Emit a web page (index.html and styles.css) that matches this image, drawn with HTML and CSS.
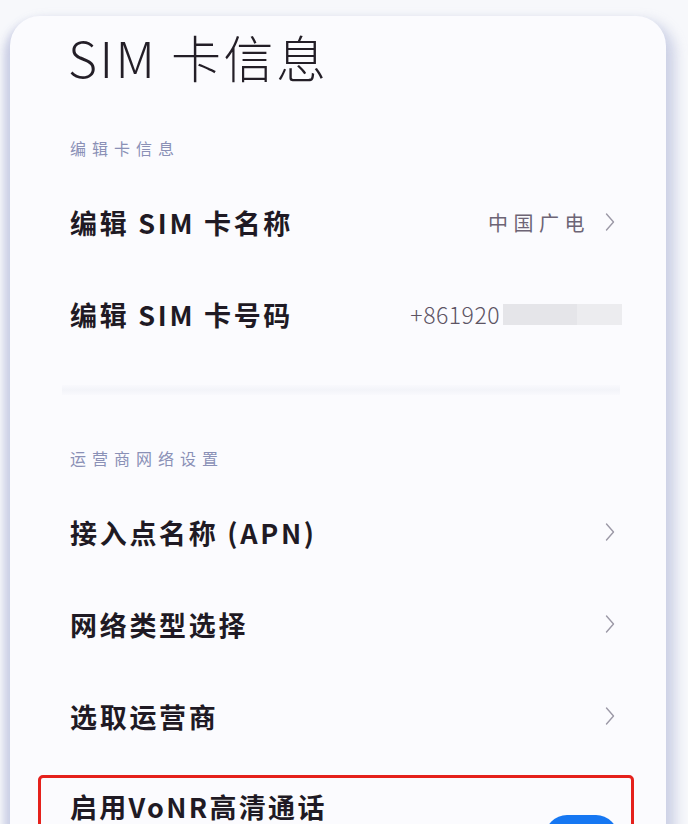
FILE: index.html
```html
<!DOCTYPE html>
<html lang="zh-CN">
<head>
<meta charset="utf-8">
<title>SIM 卡信息</title>
<link rel="stylesheet" href="styles.css">
</head>
<body>
<div class="page">
  <div class="card">
    <h1 class="title">SIM 卡信息</h1>

    <div class="section-label">编辑卡信息</div>
    <div class="row">
      <span class="row-title">编辑 SIM 卡名称</span>
      <span class="row-end">
        <span class="value">中国广电</span>
        <svg class="chev" viewBox="0 0 10 20" width="10" height="20"><polyline points="1.5,2 8.5,10 1.5,18" fill="none" stroke="#9b98a6" stroke-width="1.4" stroke-linecap="round" stroke-linejoin="round"/></svg>
      </span>
    </div>
    <div class="row">
      <span class="row-title">编辑 SIM 卡号码</span>
      <span class="row-end row-end-wide">
        <span class="number">+861920</span>
        <span class="mask"></span>
      </span>
    </div>

    <div class="divider"></div>

    <div class="section-label">运营商网络设置</div>
    <div class="row">
      <span class="row-title">接入点名称 (APN)</span>
      <svg class="chev" viewBox="0 0 10 20" width="10" height="20"><polyline points="1.5,2 8.5,10 1.5,18" fill="none" stroke="#9b98a6" stroke-width="1.4" stroke-linecap="round" stroke-linejoin="round"/></svg>
    </div>
    <div class="row">
      <span class="row-title">网络类型选择</span>
      <svg class="chev" viewBox="0 0 10 20" width="10" height="20"><polyline points="1.5,2 8.5,10 1.5,18" fill="none" stroke="#9b98a6" stroke-width="1.4" stroke-linecap="round" stroke-linejoin="round"/></svg>
    </div>
    <div class="row">
      <span class="row-title">选取运营商</span>
      <svg class="chev" viewBox="0 0 10 20" width="10" height="20"><polyline points="1.5,2 8.5,10 1.5,18" fill="none" stroke="#9b98a6" stroke-width="1.4" stroke-linecap="round" stroke-linejoin="round"/></svg>
    </div>

    <div class="highlight">
      <span class="row-title hl-title">启用VoNR高清通话</span>
      <span class="toggle"></span>
    </div>
  </div>
</div>
</body>
</html>
```

FILE: styles.css
```css
html, body {
  margin: 0;
  padding: 0;
}
body {
  width: 688px;
  height: 824px;
  overflow: hidden;
  background: #f7f8fb;
  font-family: "Noto Sans CJK SC", "Noto Sans", sans-serif;
  color: #1f1a24;
}
.page {
  padding: 16px 22px 0 10px;
  height: 808px;
}
.card {
  background: #fbfbfe;
  border-radius: 30px 30px 0 0;
  height: 100%;
  padding-top: 9px;
  box-shadow: -4px 8px 8px 2px rgba(196, 201, 226, 0.85), 6px 8px 12px 4px rgba(200, 205, 228, 0.8);
  overflow: hidden;
}
.title {
  margin: 0 0 0 58px;
  font-size: 50px;
  line-height: 62px;
  font-weight: 300;
  color: #231e27;
  letter-spacing: 2.5px;
}
.section-label {
  margin: 51px 0 18px 60px;
  font-size: 16px;
  line-height: 20px;
  letter-spacing: 6px;
  color: #8a90b6;
}
.divider + .section-label {
  margin-top: 0;
}
.row {
  height: 92px;
  display: flex;
  align-items: center;
  justify-content: space-between;
  padding: 0 51px 0 60px;
}
.row-title {
  font-size: 27px;
  font-weight: 700;
  letter-spacing: 2.7px;
  color: #1f1a24;
}
.row-end {
  display: flex;
  align-items: center;
  gap: 15px;
}
.row-end-wide {
  gap: 3px;
  margin-right: -7px;
}
.value {
  font-size: 20px;
  letter-spacing: 5.5px;
  color: #6d6475;
}
.number {
  font-size: 23px;
  font-weight: 300;
  color: #5d5464;
  letter-spacing: 0.5px;
}
.mask {
  width: 119px;
  height: 21px;
  background: linear-gradient(to right, #e5e5e9 0, #e5e5e9 62%, #ececef 62%, #ececef 100%);
}
.chev {
  display: block;
  flex: none;
}
.divider {
  height: 10px;
  margin: 25px 46px 53px 52px;
  background: linear-gradient(to bottom, #f9f9fd, #f3f4f9, #f9f9fd);
}
.highlight {
  margin: 13px 32px 0 28px;
  border: 3px solid #e5211c;
  border-radius: 5px;
  padding: 14px 13px 0 29px;
  height: 80px;
  display: flex;
  justify-content: space-between;
  align-items: flex-start;
}
.hl-title {
  line-height: 30px;
  letter-spacing: 2.3px;
}
.toggle {
  margin-top: 23px;
  width: 73px;
  height: 44px;
  border-radius: 22px;
  background: #1677f2;
}
```
